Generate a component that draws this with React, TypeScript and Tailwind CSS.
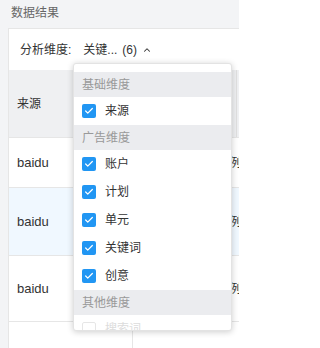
import { ChevronUp, Check } from "lucide-react";

interface Option {
  label: string;
  checked: boolean;
  disabled?: boolean;
}

interface Group {
  title: string;
  options: Option[];
}

const groups: Group[] = [
  { title: "基础维度", options: [{ label: "来源", checked: true }] },
  {
    title: "广告维度",
    options: [
      { label: "账户", checked: true },
      { label: "计划", checked: true },
      { label: "单元", checked: true },
      { label: "关键词", checked: true },
      { label: "创意", checked: true },
    ],
  },
  { title: "其他维度", options: [{ label: "搜索词", checked: false, disabled: true }] },
];

const rows = [
  { source: "baidu", name: "百度推广账户示例东方", h: "h-[50px]", bg: "bg-white" },
  { source: "baidu", name: "百度推广账户示例东方", h: "h-[68px]", bg: "bg-[#f0f8ff]" },
  { source: "baidu", name: "百度推广账户示例东方", h: "h-[66px]", bg: "bg-white" },
  { source: "", name: "", h: "h-[50px]", bg: "bg-white" },
];

const CheckBox = ({ checked, disabled }: { checked: boolean; disabled?: boolean }) =>
  checked ? (
    <span className="w-[14px] h-[14px] rounded-[2px] bg-[#2196f3] flex items-center justify-center shrink-0">
      <Check className="w-[10px] h-[10px] text-white" strokeWidth={3} />
    </span>
  ) : (
    <span
      className={`w-[14px] h-[14px] rounded-[2px] border shrink-0 bg-white ${
        disabled ? "border-[#e6e6e6]" : "border-[#cccccc]"
      }`}
    />
  );

const App = () => {
  return (
    <div
      className="w-[239px] h-[348px] overflow-hidden bg-[#f3f4f6] text-[12px] text-[#333]"
      style={{ fontFamily: '"Liberation Sans", "Noto Sans CJK SC", sans-serif' }}
    >
      {/* Title */}
      <div className="h-[28px] pl-[11px] pt-[4px] leading-[18px] text-[#666]">数据结果</div>

      {/* Card */}
      <div className="relative ml-[8px] w-[260px] bg-white border border-r-0 border-b-0 border-[#e6e6e6]">
        <div className="h-[41px] flex items-center pl-[11px]">
          <span>分析维度:</span>
          <span className="ml-[12px]">关键...</span>
          <span className="ml-[5px]">(6)</span>
          <ChevronUp className="ml-[5px] w-[10px] h-[10px] text-[#333]" strokeWidth={2.5} />
        </div>

        {/* Table */}
        <div className="flex flex-col">
          <div className="h-[68px] flex bg-[#eff0f2] border-b border-[#e6e6e6]">
            <div className="w-[124px] flex items-center pl-[8px] border-r border-[#e6e6e6]">来源</div>
            <div className="w-[103px]" />
            <div className="flex-1 border-l border-[#e0e0e0]" />
          </div>
          {rows.map((r, i) => (
            <div key={i} className={`${r.h} flex ${r.bg} border-b border-[#e6e6e6]`}>
              <div className="w-[124px] flex items-center pl-[8px] border-r border-[#e6e6e6] text-[13px]">{r.source}</div>
              <div className="flex-1 flex items-center pl-[12px] overflow-hidden whitespace-nowrap">{r.name}</div>
            </div>
          ))}
        </div>

        {/* Dropdown */}
        <div className="absolute left-[64px] top-[34px] w-[159px] h-[268px] bg-white rounded-[3px] border border-[#e3e3e3] shadow-[0_1px_6px_rgba(0,0,0,0.2)] overflow-hidden pt-[8px]">
          {groups.map((g) => (
            <div key={g.title}>
              <div className="h-[25px] flex items-center pl-[8px] bg-[#ebecef] text-[#999]">{g.title}</div>
              {g.options.map((o) => (
                <div key={o.label} className="h-[28px] flex items-center pl-[8px] gap-[9px]">
                  <CheckBox checked={o.checked} disabled={o.disabled} />
                  <span className={o.disabled ? "text-[#dcdcdc]" : "text-[#333]"}>{o.label}</span>
                </div>
              ))}
            </div>
          ))}
        </div>
      </div>
    </div>
  );
};

export default App;
